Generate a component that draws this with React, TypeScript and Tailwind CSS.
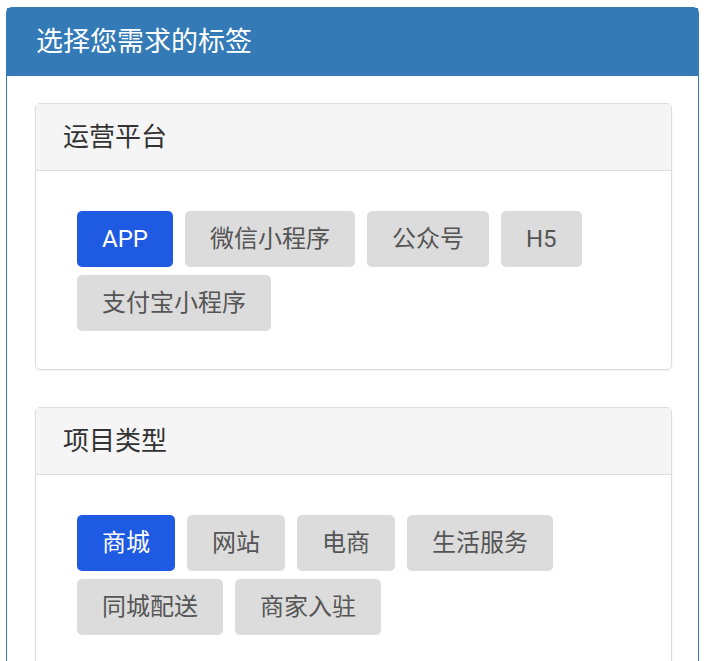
const groups = [
  { title: '运营平台', tags: ['APP', '微信小程序', '公众号', 'H5', '支付宝小程序'] },
  { title: '项目类型', tags: ['商城', '网站', '电商', '生活服务', '同城配送', '商家入驻'] },
]

function Tag({ label, active }: { label: string; active: boolean }) {
  return (
    <span
      className={`inline-flex h-[56px] items-center rounded-[5px] px-[25px] text-[24px] leading-none ${
        active ? 'bg-[#1f5ae3] text-white' : 'bg-[#dcdcdc] text-[#555]'
      }`}
    >
      {label}
    </span>
  )
}

export default function App() {
  return (
    <div className="min-h-[661px] bg-white pl-[6px] pr-[6px] pt-[7px] font-['Roboto','Noto_Sans_CJK_SC',sans-serif]">
      <div className="rounded-t-[6px] border border-[#337ab7] bg-white">
        <div className="flex h-[68px] items-center bg-[#337ab7] px-[29px] text-[27px] text-white">
          选择您需求的标签
        </div>
        <div className="flex flex-col gap-[37px] pl-[28px] pr-[26px] pt-[27px]">
          {groups.map((g) => (
            <div key={g.title} className="rounded-[5px] border border-[#dddddd] shadow-[0_1px_2px_rgba(0,0,0,0.06)]">
              <div className="flex h-[67px] items-center border-b border-[#dddddd] bg-[#f5f5f5] px-[27px] text-[26px] text-[#333]">
                {g.title}
              </div>
              <div className="flex flex-wrap gap-x-[12px] gap-y-[8px] px-[41px] pb-[38px] pt-[40px]">
                {g.tags.map((t, i) => (
                  <Tag key={t} label={t} active={i === 0} />
                ))}
              </div>
            </div>
          ))}
        </div>
      </div>
    </div>
  )
}
